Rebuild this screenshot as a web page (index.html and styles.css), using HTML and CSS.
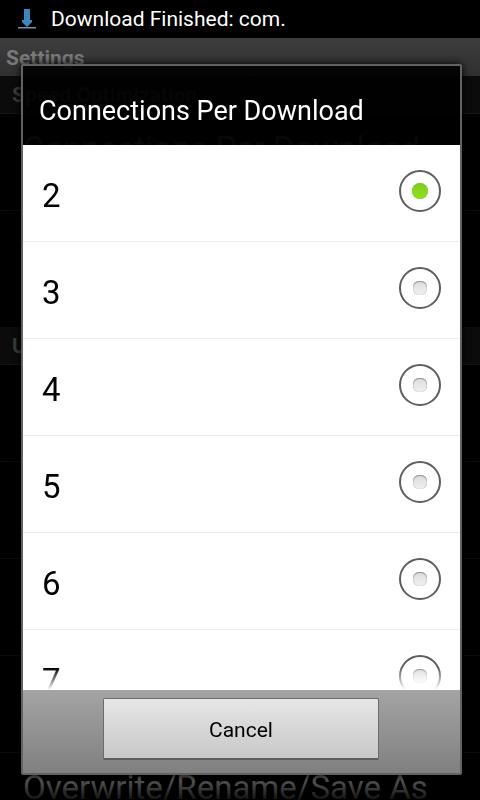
FILE: index.html
```html
<!DOCTYPE html>
<html lang="en">
<head>
  <meta charset="UTF-8">
  <meta name="viewport" content="width=device-width, initial-scale=1.0">
  <title>Settings</title>
  <link rel="stylesheet" href="styles.css">
</head>
<body>
  <div class="status-bar">
    <svg class="status-icon" viewBox="0 0 18 20" aria-hidden="true">
      <path d="M6 0h6v11h2v2l-5 5-5-5v-2h2z" fill="#3f86bd"/>
      <path d="M0 18h18v1.5H0z" fill="#6f93ad"/>
    </svg>
    <span>Download Finished: com.</span>
  </div>

  <main class="settings">
    <h1 class="title-bar">Settings</h1>
    <h2 class="category">Speed Optimization</h2>
    <div class="pref">Connections Per Download</div>
    <div class="pref pref-tall"></div>
    <h2 class="category">U</h2>
    <div class="pref"></div>
    <div class="pref"></div>
    <div class="pref"></div>
    <div class="pref"></div>
    <div class="pref">Overwrite/Rename/Save As</div>
  </main>

  <div class="overlay">
    <form class="dialog" role="dialog" aria-labelledby="dialogTitle">
      <h2 id="dialogTitle" class="dialog-title">Connections Per Download</h2>
      <div class="options">
        <label class="option"><span>2</span><input type="radio" name="connections" value="2" checked></label>
        <label class="option"><span>3</span><input type="radio" name="connections" value="3"></label>
        <label class="option"><span>4</span><input type="radio" name="connections" value="4"></label>
        <label class="option"><span>5</span><input type="radio" name="connections" value="5"></label>
        <label class="option"><span>6</span><input type="radio" name="connections" value="6"></label>
        <label class="option"><span>7</span><input type="radio" name="connections" value="7"></label>
      </div>
      <div class="dialog-footer">
        <button type="button" class="cancel">Cancel</button>
      </div>
    </form>
  </div>
</body>
</html>
```

FILE: styles.css
```css
* { box-sizing: border-box; }
body { margin: 0; height: 100vh; overflow: hidden; display: flex; flex-direction: column; background: #000; color: #fff; font-family: Roboto, "Liberation Sans", sans-serif; }
h1, h2 { margin: 0; }

.status-bar { flex: none; height: 38px; padding-left: 18px; display: flex; align-items: center; gap: 15px; font-size: 21px; }
.status-icon { width: 18px; height: 20px; }

.settings { flex: 1; min-height: 0; overflow: hidden; position: relative; color: #565656; }
.settings::after { content: ""; position: absolute; left: 0; right: 0; bottom: 0; height: 20px; background: linear-gradient(transparent, rgba(0, 0, 0, 0.8)); }
.title-bar { height: 38px; padding-left: 6px; line-height: 40px; font-size: 21px; color: #7a7a7a; background: linear-gradient(#3d3d3d, #303030); }
.category { height: 38px; padding-left: 12px; line-height: 38px; font-size: 21px; color: #3c3c3c; background: #0b0b0b; border-bottom: 1px solid #161616; }
.pref { height: 97px; padding: 15px 23px 0; line-height: 40px; font-size: 33px; white-space: nowrap; border-bottom: 1px solid #0c0c0c; }
.pref-tall { height: 116px; border-bottom: 0; }

.overlay { position: fixed; inset: 0; padding: 64px 18px 25px 21px; display: flex; }
.dialog { flex: 1; min-width: 0; display: flex; flex-direction: column; border: 2px solid #626262; border-radius: 2px; box-shadow: 0 0 8px #000; }
.dialog-title { flex: none; height: 79px; padding: 10px 16px 0; line-height: 70px; font-size: 27px; font-weight: 400; background: rgba(0, 0, 0, 0.9); white-space: nowrap; }

.options { flex: 1; min-height: 0; overflow: hidden; position: relative; background: #fff; color: #000; }
.options::after { content: ""; position: absolute; left: 0; right: 0; bottom: 0; height: 22px; background: linear-gradient(rgba(255, 255, 255, 0), #fff); }
.option { height: 97px; padding: 0 19px 4px 19px; display: flex; align-items: center; justify-content: space-between; font-size: 33px; border-bottom: 1px solid #ececec; }
.option span { padding-top: 8px; }
.option input { appearance: none; width: 42px; height: 42px; margin: 0; display: grid; place-items: center; border: 2px solid #5e5e5e; border-radius: 50%; }
.option input::before { content: ""; width: 14px; height: 14px; border-radius: 6px; background: linear-gradient(#dcdcdc, #f0f0f0); box-shadow: inset 0 1px 1px #929292, inset 0 0 1px #a8a8a8; }
.option input:checked::before { width: 16px; height: 16px; border-radius: 50%; background: linear-gradient(#7fce20, #92e01e); box-shadow: inset 0 0 1px #5f9c2c; }

.dialog-footer { flex: none; height: 83px; padding: 8px 81px 13px 80px; display: flex; background: linear-gradient(#a4a4a4, #808080); }
.cancel { flex: 1; padding: 2px 0 0; font-family: inherit; font-size: 21px; color: #000; background: linear-gradient(#e6e6e6, #c8c8c8); border: 1px solid #6c6c6c; border-bottom: 2px solid #5c5c5c; border-radius: 2px; }
```
